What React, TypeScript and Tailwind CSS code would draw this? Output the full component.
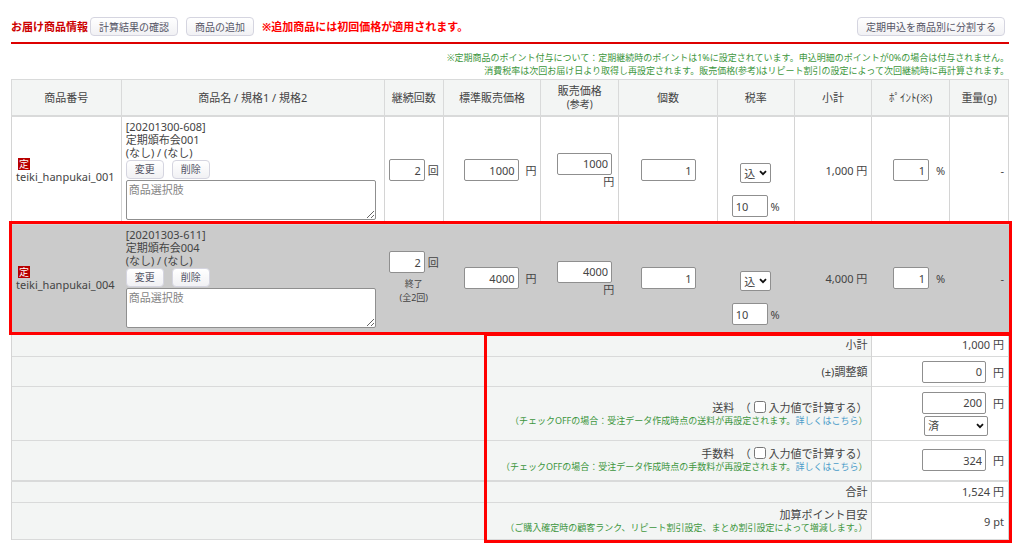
import type { ReactNode } from "react";
import clsx from "clsx";

type Item = {
  id: string;
  code: string;
  name: string;
  count: string;
  countNote?: string[];
  price: string;
  subtotal: string;
  selected?: boolean;
};

const items: Item[] = [
  {
    id: "teiki_hanpukai_001",
    code: "[20201300-608]",
    name: "定期頒布会001",
    count: "2",
    price: "1000",
    subtotal: "1,000 円",
  },
  {
    id: "teiki_hanpukai_004",
    code: "[20201303-611]",
    name: "定期頒布会004",
    count: "2",
    countNote: ["終了", "(全2回)"],
    price: "4000",
    subtotal: "4,000 円",
    selected: true,
  },
];

const Button = ({ children }: { children: ReactNode }) => (
  <button
    type="button"
    className="h-[19px] rounded-[4px] border border-[#d5d5e0] bg-linear-to-b from-white to-[#f1f1f4] px-2 text-[10px] leading-4 text-[#555566]"
  >
    {children}
  </button>
);

const Field = ({
  label,
  value,
  className,
}: {
  label: string;
  value: string;
  className: string;
}) => (
  <input
    type="text"
    aria-label={label}
    defaultValue={value}
    className={clsx(
      "h-[22px] rounded-[2px] border border-[#8f8f8f] bg-white px-[3px]",
      className
    )}
  />
);

const Select = ({
  label,
  options,
  className,
}: {
  label: string;
  options: string[];
  className: string;
}) => (
  <div className={clsx("relative", className)}>
    <select
      aria-label={label}
      className="block h-5 w-full appearance-none rounded-[2px] border border-[#8f8f8f] bg-white pl-[3px]"
    >
      {options.map((option) => (
        <option key={option}>{option}</option>
      ))}
    </select>
    <svg
      viewBox="0 0 8 6"
      aria-hidden="true"
      className="pointer-events-none absolute top-[7px] right-1 h-[6px] w-2"
    >
      <path
        d="M1 1.2 4 4.2 7 1.2"
        fill="none"
        stroke="#111111"
        strokeWidth="1.8"
      />
    </svg>
  </div>
);

const Th = ({ children }: { children: ReactNode }) => (
  <th
    scope="col"
    className="h-9 border border-b-2 border-[#d9dada] bg-[#f3f5f4] p-0 font-normal whitespace-nowrap"
  >
    {children}
  </th>
);

const Td = ({
  children,
  className,
}: {
  children: ReactNode;
  className?: string;
}) => (
  <td className={clsx("border-x border-[#d4d4d4] px-1", className)}>
    {children}
  </td>
);

const ItemRow = ({ item }: { item: Item }) => (
  <tr
    className={clsx(
      item.selected
        ? "bg-[#cbcbcb] outline-3 outline-[#ff0000] [&>td]:border-[#cbcbcb]"
        : "border-b border-[#d4d4d4]"
    )}
  >
    <Td>
      <span className="ml-[2px] block size-3 bg-[#b80000] text-center text-[10px] leading-3 text-white">
        定
      </span>
      {item.id}
    </Td>
    <Td className="pt-[3px] pb-1">
      <p>{item.code}</p>
      <p>{item.name}</p>
      <p>(なし) / (なし)</p>
      <div className="flex gap-2 py-px">
        <Button>変更</Button>
        <Button>削除</Button>
      </div>
      <textarea
        aria-label="商品選択肢"
        placeholder="商品選択肢"
        className="block h-10 w-[250px] max-w-full rounded-[2px] border border-[#8f8f8f] bg-white px-[2px] py-[2px] placeholder:text-[#858585]"
      />
    </Td>
    <Td className="text-center whitespace-nowrap">
      <Field label="継続回数" value={item.count} className="w-9 text-right" />{" "}
      回
      {item.countNote && (
        <p className="mt-1 text-[9px] leading-[14px]">
          {item.countNote[0]}
          <br />
          {item.countNote[1]}
        </p>
      )}
    </Td>
    <Td className="text-right whitespace-nowrap">
      <Field
        label="標準販売価格"
        value={item.price}
        className="mr-1 w-[55px] text-right"
      />{" "}
      円
    </Td>
    <Td className="text-right">
      <Field
        label="販売価格(参考)"
        value={item.price}
        className="mr-[2px] w-[55px] text-right"
      />
      <span className="block">円</span>
    </Td>
    <Td className="text-center">
      <Field label="個数" value="1" className="w-[55px] text-right" />
    </Td>
    <Td className="pt-10 whitespace-nowrap">
      <div className="flex flex-col items-center gap-3">
        <Select label="税区分" options={["込", "別"]} className="w-[31px]" />
        <div>
          <Field label="税率" value="10" className="w-9" /> %
        </div>
      </div>
    </Td>
    <Td className="text-right">{item.subtotal}</Td>
    <Td className="text-right whitespace-nowrap">
      <Field label="ポイント" value="1" className="mr-1 w-9 text-right" /> %
    </Td>
    <Td className="text-right">-</Td>
  </tr>
);

const TotalRow = ({
  label,
  note,
  className,
  children,
}: {
  label: ReactNode;
  note?: ReactNode;
  className: string;
  children: ReactNode;
}) => (
  <tr className={clsx("border-[#d9dada]", className)}>
    <th
      scope="row"
      className="border-x border-[#d4d4d4] bg-[#f3f5f4] px-1 py-0 text-right font-normal"
    >
      {label}
      {note && (
        <p className="text-[9px] leading-[13px] text-[#3c963c]">{note}</p>
      )}
    </th>
    <td className="border-x border-[#d4d4d4] bg-white px-1 py-0 text-right whitespace-nowrap">
      {children}
    </td>
  </tr>
);

const ManualCheck = ({ title }: { title: string }) => (
  <span>
    {title}　（{" "}
    <label>
      <input type="checkbox" className="size-3 align-[-1px]" /> 入力値で計算する
    </label>
    ）
  </span>
);

const OffNote = ({ title }: { title: string }) => (
  <>
    （チェックOFFの場合：受注データ作成時点の{title}が再設定されます。
    <a href="#" className="text-[#4a9cc9]">
      詳しくはこちら
    </a>
    ）
  </>
);

export default function App() {
  return (
    <main className="bg-white pt-[17px] pr-[15px] pb-2 pl-[11px] font-['Noto_Sans','Noto_Sans_CJK_JP',sans-serif] text-[11px] leading-[13px] text-[#444444]">
      <header className="flex items-center border-b-2 border-[#dd0000] pb-[6px]">
        <h1 className="mr-[2px] font-bold text-[#cc0000]">お届け商品情報</h1>
        <div className="flex gap-2">
          <Button>計算結果の確認</Button>
          <Button>商品の追加</Button>
        </div>
        <p className="ml-2 font-bold text-[#ff0000]">
          ※追加商品には初回価格が適用されます。
        </p>
        <div className="mr-1 ml-auto">
          <Button>定期申込を商品別に分割する</Button>
        </div>
      </header>

      <p className="mt-[7px] mb-[2px] text-right text-[9px] leading-[13px] text-[#3c963c]">
        ※定期商品のポイント付与について：定期継続時のポイントは1%に設定されています。申込明細のポイントが0%の場合は付与されません。
        <br />
        消費税率は次回お届け日より取得し再設定されます。販売価格(参考)はリピート割引の設定によって次回継続時に再計算されます。
      </p>

      {/* stacked above the totals so the selected row's outline stays whole */}
      <table className="relative z-10 w-full table-fixed border-collapse border border-[#d4d4d4]">
        <colgroup>
          <col className="w-[11%]" />
          <col className="w-[26.4%]" />
          <col className="w-[5.9%]" />
          <col className="w-[9.8%]" />
          <col className="w-[7.8%]" />
          <col className="w-[9.9%]" />
          <col className="w-[7.7%]" />
          <col className="w-[7.8%]" />
          <col className="w-[7.8%]" />
          <col className="w-[5.9%]" />
        </colgroup>
        <thead>
          <tr>
            <Th>商品番号</Th>
            <Th>商品名 / 規格1 / 規格2</Th>
            <Th>継続回数</Th>
            <Th>標準販売価格</Th>
            <Th>
              販売価格
              <br />
              <span className="text-[10px]">(参考)</span>
            </Th>
            <Th>個数</Th>
            <Th>税率</Th>
            <Th>小計</Th>
            <Th>ﾎﾟｲﾝﾄ(※)</Th>
            <Th>重量(g)</Th>
          </tr>
        </thead>
        <tbody>
          {items.map((item) => (
            <ItemRow key={item.id} item={item} />
          ))}
        </tbody>
      </table>

      <section className="relative">
        <table className="w-full table-fixed border-collapse">
          <colgroup>
            <col className="w-[86.3%]" />
            <col className="w-[13.7%]" />
          </colgroup>
          <tbody>
            <TotalRow label="小計" className="h-6 border-b">
              1,000 円
            </TotalRow>
            <TotalRow label="(±)調整額" className="h-[30px] border-b">
              <Field
                label="調整額"
                value="0"
                className="mr-1 w-16 text-right"
              />{" "}
              円
            </TotalRow>
            <TotalRow
              label={<ManualCheck title="送料" />}
              note={<OffNote title="送料" />}
              className="h-[54px] border-b"
            >
              <Field
                label="送料"
                value="200"
                className="mr-1 w-16 text-right"
              />{" "}
              円
              <Select
                label="送料の入金状況"
                options={["済", "未"]}
                className="mt-[2px] mr-4 ml-auto w-16"
              />
            </TotalRow>
            <TotalRow
              label={<ManualCheck title="手数料" />}
              note={<OffNote title="手数料" />}
              className="h-10 border-b-2"
            >
              <Field
                label="手数料"
                value="324"
                className="mr-1 w-16 text-right"
              />{" "}
              円
            </TotalRow>
            <TotalRow label="合計" className="h-[22px] border-b">
              1,524 円
            </TotalRow>
            <TotalRow
              label="加算ポイント目安"
              note="（ご購入確定時の顧客ランク、リピート割引設定、まとめ割引設定によって増減します。）"
              className="h-[37px] border-b"
            >
              9 pt
            </TotalRow>
          </tbody>
        </table>
        <div className="pointer-events-none absolute top-0 -right-[3px] -bottom-[3px] left-[47.4%] border-3 border-[#ff0000]" />
      </section>
    </main>
  );
}
